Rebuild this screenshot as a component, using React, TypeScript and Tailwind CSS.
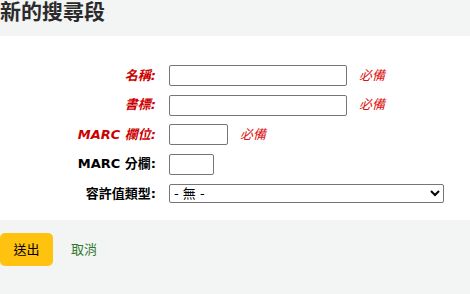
const font = { fontFamily: '"DejaVu Sans", "Noto Sans CJK TC", sans-serif' };

function Row({
  label,
  required,
  children,
}: {
  label: string;
  required?: boolean;
  children: React.ReactNode;
}) {
  return (
    <li className="flex items-center h-[21px]">
      <label
        className={`w-[156px] shrink-0 text-right text-[13px] font-bold ${
          required ? 'italic text-[#cc0000]' : 'text-black'
        }`}
      >
        {label}
      </label>
      <div className="ml-[13px] flex items-center">
        {children}
        {required && <span className="ml-[12px] text-[13px] italic text-[#dd1111]">必備</span>}
      </div>
    </li>
  );
}

export default function App() {
  return (
    <div className="w-[470px] h-[294px] bg-[#f3f4f4] overflow-hidden" style={font}>
      <div className="h-9">
        <h1 className="text-[21px] leading-[24px] font-bold text-[#2b2b2b]">新的搜尋段</h1>
      </div>

      <form className="bg-white pt-[29px] pb-[16px]">
        <ol className="flex flex-col gap-[8.5px]">
          <Row label="名稱:" required>
            <input className="w-[178px] h-[21px] border border-[#767676] rounded-[2px] px-1 text-[13px]" />
          </Row>
          <Row label="書標:" required>
            <input className="w-[178px] h-[21px] border border-[#767676] rounded-[2px] px-1 text-[13px]" />
          </Row>
          <Row label="MARC 欄位:" required>
            <input className="w-[59px] h-[21px] border border-[#767676] rounded-[2px] px-1 text-[13px]" />
          </Row>
          <Row label="MARC 分欄:">
            <input className="w-[45px] h-[21px] border border-[#767676] rounded-[2px] px-1 text-[13px]" />
          </Row>
          <Row label="容許值類型:">
            <select className="w-[275px] h-[19px] border border-[#767676] rounded-[2px] text-[13px] text-black bg-white">
              <option>- 無 -</option>
            </select>
          </Row>
        </ol>
      </form>

      <div className="flex items-center pt-[13px]">
        <button className="w-[53px] h-[33px] rounded-[5px] bg-[#ffc20e] text-[13px] text-black">送出</button>
        <a className="ml-[18px] text-[13px] text-[#2f7a2f]">取消</a>
      </div>
    </div>
  );
}
